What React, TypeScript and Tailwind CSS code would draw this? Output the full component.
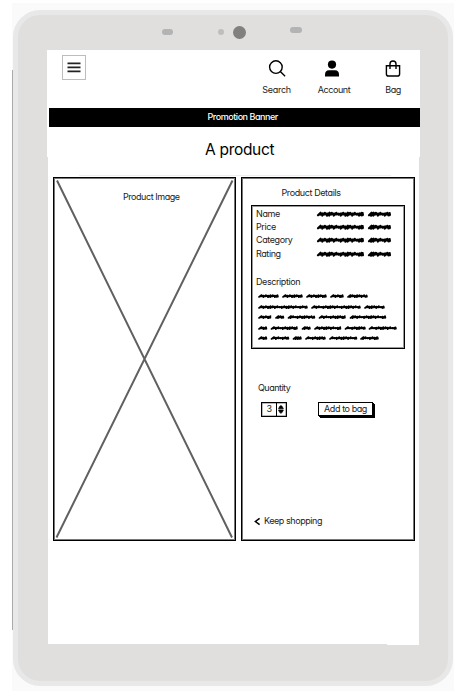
type Word = [number, number];

/* A hand-scribbled line: each word is a thick wavering stroke with a tail leading in from the lower left. */
function Scribble({ words, width, bold }: { words: Word[]; width: number; bold?: boolean }) {
  const amps = [0.5, 1.2, 0.4, 1.3, 1.2, 0.4, 1.2, 0.3];
  const k = bold ? 1.3 : 0.95;
  return (
    <svg width={width} height="8" viewBox={`0 0 ${width} 8`} className="block overflow-visible" fill="none" stroke="#000" strokeLinecap="round" strokeLinejoin="round">
      {words.map(([a, b]) => {
        let d = `M${a + 1} ${4 + k}L${a + 3.6} ${4 - k}`;
        let i = 0;
        for (let x = a + 3; x < b - 3.6; x += 2.3, i++) {
          const amp = amps[(i + Math.round(a)) % 8] * k;
          d += `L${x.toFixed(1)} ${(4 + amp).toFixed(2)}L${(x + 2.6).toFixed(1)} ${(4 - amp * 0.75).toFixed(2)}`;
        }
        d += `L${b - 2.6} ${4 + k}L${b - 1.4} ${4 - k * 0.7}L${b - 1.1} ${4 + k * 0.8}`;
        return <path key={a} d={d} strokeWidth={bold ? 2.2 : 1.75} />;
      })}
    </svg>
  );
}

const details = ["Name", "Price", "Category", "Rating"];
const description: Word[][] = [
  [[0, 21], [24, 45], [48, 69], [72, 86], [89, 110]],
  [[0, 50], [53, 103], [106, 127]],
  [[0, 13.5], [17, 26.5], [29.5, 57.5], [60.5, 88], [91.5, 128.5]],
  [[0, 9.5], [12.5, 40], [43.5, 53], [56, 83.5], [86.5, 108], [110.5, 139]],
  [[0, 9.5], [12.5, 31.5], [34.5, 44], [47, 68], [71, 99.5], [102, 121]],
];

function Header() {
  return (
    <header className="h-[58px]">
      <div className="flex items-start justify-between pl-[15px] pr-[9px]">
        <button className="mt-[5px] flex h-[25px] w-[24px] items-center justify-center border border-[#bdbdbd] bg-white">
          <svg width="14" height="12" viewBox="0 0 14 12" stroke="#222" strokeWidth="1.8">
            <path d="M.5 1.4h13M.5 5.4h13M.5 9.4h13" />
          </svg>
        </button>
        <nav className="flex pt-[8px]">
          <div className="flex w-[56px] flex-col items-center">
            <svg width="20" height="20" viewBox="0 0 20 20" fill="none" stroke="#000" strokeWidth="1.4" className="-ml-px">
              <circle cx="8.9" cy="9.1" r="6.3" />
              <path d="M13.3 13.5l4.8 4.7" />
            </svg>
            <span className="-ml-px mt-[6px] tracking-[-0.25px]">Search</span>
          </div>
          <div className="flex w-[59px] flex-col items-center">
            <svg width="20" height="20" viewBox="0 0 20 20" className="-ml-[5px]">
              <circle cx="10" cy="6.6" r="4.1" />
              <path d="M3 18.4v-1.6q0-4.6 4-4.6h6q4 0 4 4.6v1.6z" />
            </svg>
            <span className="-ml-px mt-[6px] tracking-[-0.45px]">Account</span>
          </div>
          <div className="ml-[11px] flex w-[36px] flex-col items-center">
            <svg width="20" height="20" viewBox="0 0 20 20" fill="none" stroke="#000" strokeWidth="1.4">
              <path d="M3.4 7.7h13.2v8.2q0 2.1-2 2.1H5.4q-2 0-2-2.1zM7 11V6q0-3 3-3t3 3v5" />
            </svg>
            <span className="mt-[6px] tracking-[-0.45px]">Bag</span>
          </div>
        </nav>
      </div>
    </header>
  );
}

function ProductImage() {
  return (
    <section className="relative h-[364px] w-[183px] border border-black bg-white shadow-[inset_0_0_0_1px_#777]">
      <svg className="absolute inset-0" width="181" height="362" viewBox="0 0 181 362" stroke="#606060" strokeWidth="2">
        <path d="M3 2.5L178 359.5M178.5 2.5L2.5 359.5" />
      </svg>
      <h2 className="relative pl-[69px] pt-[13px] tracking-[-0.45px]">Product Image</h2>
    </section>
  );
}

function ProductDetails() {
  return (
    <section className="flex h-[364px] w-[174px] flex-col border border-black bg-white p-px shadow-[inset_0_0_0_1px_#777]">
      <h2 className="mt-[8px] pl-[38.5px] tracking-[-0.4px]">Product Details</h2>
      <div className="ml-[8px] mt-[6px] h-[144px] w-[154px] border border-black pl-[4px] pt-px shadow-[inset_0_0_0_1px_#999]">
        {details.map((label) => (
          <div key={label} className="flex h-[13.4px] items-center">
            <span className="w-[61px] tracking-[-0.4px]">{label}</span>
            <Scribble width={75} words={[[0, 47], [51, 74]]} bold />
          </div>
        ))}
        <h3 className="mt-[15.4px] tracking-[-0.42px]">Description</h3>
        <div className="ml-[2px] mt-[4.5px]">
          {description.map((words, i) => (
            <div key={i} className="h-[10.5px]">
              <Scribble width={140} words={words} />
            </div>
          ))}
        </div>
      </div>
      <h3 className="mt-[33px] pl-[15px] tracking-[-0.52px]">Quantity</h3>
      <div className="mt-[8px] flex pl-[18px]">
        <div className="flex h-[15px] w-[26px] border border-black shadow-[inset_0_0_0_0.5px_#777]">
          <span className="w-[15px] text-center">3</span>
          <svg width="10" height="13" viewBox="0 0 10 13" className="border-l border-black">
            <path d="M1.8 5.7Q4.5-1.8 7.4 5.7zM1.8 7.1Q4.5 14.8 7.4 7.1z" stroke="#000" strokeWidth=".8" />
          </svg>
        </div>
        <button className="ml-[31px] h-[14px] w-[55px] border border-black bg-white tracking-[-0.42px] shadow-[1px_1px_0_#000,2px_2px_0_#000]">
          Add to bag
        </button>
      </div>
      <a className="mb-[12px] mt-auto flex items-center pl-[10px]">
        <svg width="8" height="10" viewBox="0 0 8 10" fill="none" stroke="#000" strokeWidth="1.5">
          <path d="M6.6 2.3L2.4 5.5l4.2 3.2" />
        </svg>
        <span className="ml-[3px] tracking-[-0.44px]">Keep shopping</span>
      </a>
    </section>
  );
}

export default function App() {
  return (
    <div className="relative h-[697px] w-[465px] overflow-hidden bg-white pl-[12px] pt-[3px] font-['Inter','Liberation_Sans',sans-serif] text-[9px] leading-[12px] text-[#222] [font-feature-settings:'cv11','ss03']">
      <div className="absolute left-[12px] top-[70px] z-10 h-[560px] w-px bg-[#aaa]" />
      <div className="h-[688px] w-[442px] bg-[#fafafa] pl-px pt-[7px]">
        <div className="relative h-[676px] w-[440px] rounded-[27px] border-[5px] border-[#e8e8e8] bg-[#e0dfde] pl-[29px] pt-[35px]">
          <div className="absolute left-[144px] top-[14px] h-[6px] w-[11px] rounded-[3px] bg-[#b3b3b3]" />
          <div className="absolute left-[200px] top-[14px] size-[6px] rounded-full bg-[#bebebe]" />
          <div className="absolute left-[215px] top-[11px] size-[13px] rounded-full bg-[#808080]" />
          <div className="absolute left-[272px] top-[12px] h-[6px] w-[12px] rounded-[3px] bg-[#b3b3b3]" />
          <main className="h-[107px] w-[373px] bg-white">
            <Header />
            <div className="ml-[2px] h-[19px] w-[371px] bg-black pl-[158.5px] pt-[3px] font-medium tracking-[-0.45px] text-white">
              Promotion Banner
            </div>
            <h1 className="pl-[158px] pt-[12px] text-[15.5px] leading-[22px] tracking-[-0.3px] text-black">A product</h1>
          </main>
          <div className="ml-px h-[487px] w-[371px] bg-white pl-[5px] pt-[18px]">
            <div className="mb-px ml-[26px] h-px w-[312px] bg-[#eee]" />
            <div className="flex gap-[5px]">
              <ProductImage />
              <ProductDetails />
            </div>
          </div>
          <div className="ml-[340px] h-px w-[32px] bg-white" />
        </div>
      </div>
    </div>
  );
}
